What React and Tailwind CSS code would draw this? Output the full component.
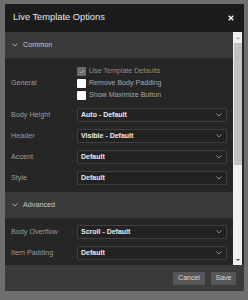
import React from "react";

const font = { fontFamily: '"Liberation Sans", Arial, sans-serif' };

const Chevron = ({ className = "" }) => (
  <svg width="6" height="4" viewBox="0 0 6 4" className={className}>
    <path d="M0.5 0.5 L3 3 L5.5 0.5" fill="none" stroke="currentColor" strokeWidth="0.9" />
  </svg>
);

const Section = ({ title }) => (
  <div className="flex h-[26px] items-center gap-[5px] bg-[#3a3a3a] pl-[7px] text-[7.2px] text-[#c8c8c8]">
    <Chevron className="text-[#b0b0b0]" />
    <span>{title}</span>
  </div>
);

const Select = ({ label, value }) => (
  <div className="flex h-[14px] items-center">
    <div className="w-[72px] pl-[6px] text-[7.2px] text-[#9c9c9c]">{label}</div>
    <div className="flex h-[14px] w-[150px] items-center justify-between rounded-[1px] border border-[#3f3f3f] bg-[#222222] pl-[3px] pr-[4px]">
      <span className="text-[7px] font-bold text-[#ececec]">{value}</span>
      <Chevron className="text-[#9a9a9a]" />
    </div>
  </div>
);

const Check = ({ checked, label }) => (
  <div className="flex h-[12px] items-center gap-[3px]">
    {checked ? (
      <div className="flex h-[9px] w-[9px] items-center justify-center rounded-[1px] bg-[#6c6c6c]">
        <svg width="6" height="5" viewBox="0 0 6 5">
          <path d="M0.8 2.6 L2.3 4 L5.2 1" fill="none" stroke="#b8b8b8" strokeWidth="0.9" />
        </svg>
      </div>
    ) : (
      <div className="h-[9px] w-[9px] rounded-[1px] bg-white" />
    )}
    <span className={`text-[7.1px] ${checked ? "text-[#8e8e8e]" : "text-[#a6a6a6]"}`}>{label}</span>
  </div>
);

export default function App() {
  return (
    <div className="h-[300px] w-[248px] bg-[#6e6e6e] pl-[5px] pt-[4px]" style={font}>
      <div className="flex h-[287px] w-[239px] flex-col bg-[#262626]">
        {/* header */}
        <div className="flex h-[28px] items-center justify-between bg-[#1c1c1c] pl-[8px] pr-[10px]">
          <span className="text-[9.3px] text-[#e8e8e8]">Live Template Options</span>
          <svg width="6" height="6" viewBox="0 0 6 6">
            <path d="M0.7 0.7 L5.3 5.3 M5.3 0.7 L0.7 5.3" stroke="#f0f0f0" strokeWidth="1.5" />
          </svg>
        </div>

        {/* body */}
        <div className="flex h-[233px]">
          <div className="w-[228px] overflow-hidden">
            <Section title="Common" />
            <div className="flex flex-col gap-[7px] pb-[7px] pt-[7px]">
              <div className="flex items-center">
                <div className="w-[72px] pl-[6px] text-[7.2px] text-[#9c9c9c]">General</div>
                <div className="flex flex-col">
                  <Check checked label="Use Template Defaults" />
                  <Check label="Remove Body Padding" />
                  <Check label="Show Maximize Button" />
                </div>
              </div>
              <Select label="Body Height" value="Auto - Default" />
              <Select label="Header" value="Visible - Default" />
              <Select label="Accent" value="Default" />
              <Select label="Style" value="Default" />
            </div>
            <Section title="Advanced" />
            <div className="flex flex-col gap-[7px] pt-[7px]">
              <Select label="Body Overflow" value="Scroll - Default" />
              <Select label="Item Padding" value="Default" />
            </div>
          </div>
          {/* scrollbar */}
          <div className="flex w-[9px] flex-col items-center bg-[#f0f0f0]">
            <div className="flex h-[11px] items-center justify-center">
              <div className="h-0 w-0 border-x-[2.5px] border-b-[2.5px] border-x-transparent border-b-[#a3a3a3]" />
            </div>
            <div className="h-[122px] w-[8px] bg-[#c1c1c1]" />
            <div className="flex-1" />
            <div className="flex h-[11px] items-center justify-center">
              <div className="h-0 w-0 border-x-[2.5px] border-t-[2.5px] border-x-transparent border-t-[#505050]" />
            </div>
          </div>
        </div>

        {/* footer */}
        <div className="flex h-[26px] items-start justify-end gap-[6px] bg-[#3a3a3a] pr-[8px] pt-[7px]">
          <div className="flex h-[13px] w-[32px] items-center justify-center rounded-[1px] bg-[#565656] text-[7px] text-[#dcdcdc]">
            Cancel
          </div>
          <div className="flex h-[13px] w-[25px] items-center justify-center rounded-[1px] bg-[#565656] text-[7px] text-[#dcdcdc]">
            Save
          </div>
        </div>
      </div>
    </div>
  );
}
